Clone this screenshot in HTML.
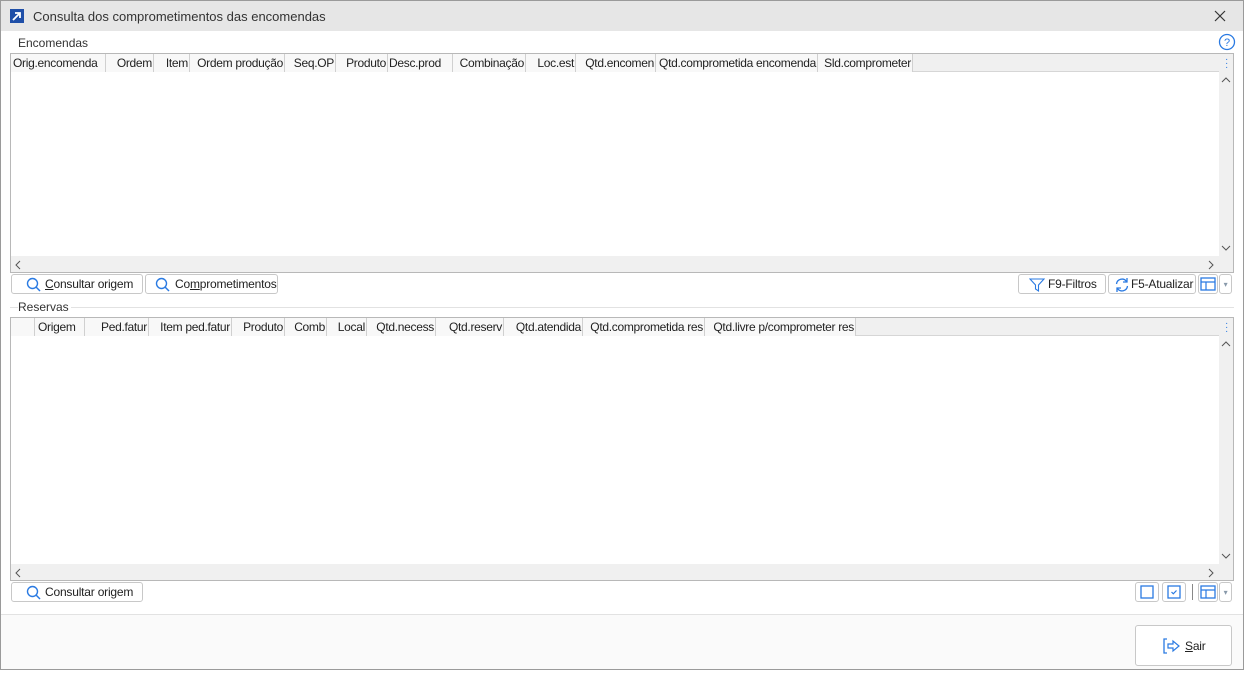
<!DOCTYPE html><html><head><style>
*{box-sizing:border-box;margin:0;padding:0}
body{width:1258px;height:677px;background:#fff;font-family:"Liberation Sans",sans-serif;font-size:12px;color:#222;position:relative;overflow:hidden}
.a{position:absolute}
.win{left:0;top:0;width:1244px;height:670px;border:1px solid #9a9a9a;background:#fff}
.title{left:1px;top:1px;width:1242px;height:30px;background:#e6e6e6}
.grid{border:1px solid #b8b8b8;background:#fff}
.hdr{position:absolute;left:0;top:0;height:18px;background:#f0f0f0;border-bottom:1px solid #d6d6d6}
.c{position:absolute;top:0;height:18px;line-height:18px;border-right:1px solid #d0d0d0;text-align:right;padding-right:1px;white-space:nowrap;font-size:12px;letter-spacing:-0.3px;background:#f8f8f8}
.vs{position:absolute;right:0;top:0;width:14px;bottom:0;background:#f0f0f0}
.hs{position:absolute;left:0;bottom:0;height:16px;right:14px;background:#f0f0f0}
.btn{position:absolute;height:20px;border:1px solid #c8c8c8;border-radius:3px;background:#fff;font-size:12px;line-height:19px;white-space:nowrap;letter-spacing:-0.2px}
.btn svg{position:absolute}
.lbl{font-size:12px;color:#333}
</style></head><body>
<div class="a win"></div>
<div class="a title"></div>
<div class="a" style="left:10px;top:9px;width:14px;height:14px;background:#1f4fa8"><svg width="14" height="14"><path d="M3 11 L10 4 M5 4 H10 V9" stroke="#fff" stroke-width="1.8" fill="none"/></svg></div>
<div class="a" style="left:33px;top:9px;font-size:13px;color:#333">Consulta dos comprometimentos das encomendas</div>
<svg class="a" style="left:1214px;top:10px" width="12" height="12"><path d="M1 1L11 11M11 1L1 11" stroke="#333" stroke-width="1.2"/></svg>
<div class="a lbl" style="left:18px;top:36px">Encomendas</div>
<svg class="a" style="left:1218px;top:33px" width="18" height="18"><circle cx="9" cy="9" r="7.5" stroke="#2a7ae2" stroke-width="1.3" fill="none"/><text x="9" y="13" font-size="11" text-anchor="middle" fill="#2a7ae2" font-family="Liberation Sans">?</text></svg>

<div class="a grid" style="left:10px;top:53px;width:1224px;height:220px">
<div class="hdr" style="width:1208px"></div>
<div class="c" style="left:0;width:95px;text-align:left;padding-left:2px">Orig.encomenda</div>
<div class="c" style="left:95px;width:48px">Ordem</div>
<div class="c" style="left:143px;width:36px">Item</div>
<div class="c" style="left:179px;width:95px">Ordem produção</div>
<div class="c" style="left:274px;width:51px">Seq.OP</div>
<div class="c" style="left:325px;width:52px">Produto</div>
<div class="c" style="left:377px;width:65px;text-align:left;padding-left:1px">Desc.prod</div>
<div class="c" style="left:442px;width:73px">Combinação</div>
<div class="c" style="left:515px;width:50px">Loc.est</div>
<div class="c" style="left:565px;width:80px">Qtd.encomen</div>
<div class="c" style="left:645px;width:162px">Qtd.comprometida encomenda</div>
<div class="c" style="left:807px;width:95px">Sld.comprometer</div>
<div class="vs"><div class="a" style="left:6px;top:4px;color:#2a7ae2;font-size:10px;line-height:4px">·<br>·<br>·</div><svg class="a" style="left:2px;top:22px" width="10" height="8"><path d="M1 6L5 2L9 6" stroke="#555" fill="none"/></svg><svg class="a" style="left:2px;top:190px" width="10" height="8"><path d="M1 2L5 6L9 2" stroke="#555" fill="none"/></svg></div>
<div class="hs"><svg class="a" style="left:3px;top:4px" width="8" height="10"><path d="M6 1L2 5L6 9" stroke="#555" fill="none"/></svg><svg class="a" style="right:4px;top:4px" width="8" height="10"><path d="M2 1L6 5L2 9" stroke="#555" fill="none"/></svg></div>
</div>

<div class="btn" style="left:11px;top:274px;width:132px"><svg style="left:14px;top:2px" width="16" height="16"><circle cx="6.5" cy="6.5" r="5" stroke="#2a7ae2" stroke-width="1.4" fill="none"/><path d="M10 10L14 14" stroke="#2a7ae2" stroke-width="1.5"/></svg><span style="position:absolute;left:33px"><u>C</u>onsultar origem</span></div>
<div class="btn" style="left:145px;top:274px;width:133px"><svg style="left:9px;top:2px" width="16" height="16"><circle cx="6.5" cy="6.5" r="5" stroke="#2a7ae2" stroke-width="1.4" fill="none"/><path d="M10 10L14 14" stroke="#2a7ae2" stroke-width="1.5"/></svg><span style="position:absolute;left:29px">Co<u>m</u>prometimentos</span></div>
<div class="btn" style="left:1018px;top:274px;width:88px"><svg style="left:10px;top:2px" width="16" height="16"><path d="M1 2H15L9.5 8V14L6.5 12V8Z" stroke="#2a7ae2" stroke-width="1.1" fill="none"/></svg><span style="position:absolute;left:29px">F9-Filtros</span></div>
<div class="btn" style="left:1108px;top:274px;width:88px"><svg style="left:5px;top:2px" width="16" height="16"><path d="M2.5 7A5.5 5.5 0 0 1 12.5 4.5M13.5 9A5.5 5.5 0 0 1 3.5 11.5" stroke="#2a7ae2" stroke-width="1.3" fill="none"/><path d="M13 1V5H9M3 15V11H7" stroke="#2a7ae2" stroke-width="1.3" fill="none"/></svg><span style="position:absolute;left:22px">F5-Atualizar</span></div>
<div class="btn" style="left:1198px;top:274px;width:20px"><svg style="left:1px;top:1px" width="16" height="16"><rect x="1" y="2" width="14" height="12" stroke="#2a7ae2" stroke-width="1.3" fill="none"/><path d="M1 6H15M6 6V14" stroke="#2a7ae2" stroke-width="1.2"/></svg></div>
<div class="btn" style="left:1219px;top:274px;width:13px;color:#89a;font-size:8px;text-align:center">▾</div>

<div class="a" style="left:10px;top:307px;width:1224px;height:1px;background:#e2e2e2"></div>
<div class="a lbl" style="left:18px;top:300px;background:#fff;padding-right:2px">Reservas</div>

<div class="a grid" style="left:10px;top:317px;width:1224px;height:264px">
<div class="hdr" style="width:1208px"></div>
<div class="c" style="left:0;width:24px"></div>
<div class="c" style="left:24px;width:50px;text-align:left;padding-left:3px">Origem</div>
<div class="c" style="left:74px;width:64px">Ped.fatur</div>
<div class="c" style="left:138px;width:83px">Item ped.fatur</div>
<div class="c" style="left:221px;width:53px">Produto</div>
<div class="c" style="left:274px;width:42px">Comb</div>
<div class="c" style="left:316px;width:40px">Local</div>
<div class="c" style="left:356px;width:69px">Qtd.necess</div>
<div class="c" style="left:425px;width:68px">Qtd.reserv</div>
<div class="c" style="left:493px;width:79px">Qtd.atendida</div>
<div class="c" style="left:572px;width:122px">Qtd.comprometida res</div>
<div class="c" style="left:694px;width:151px">Qtd.livre p/comprometer res</div>
<div class="vs"><div class="a" style="left:6px;top:4px;color:#2a7ae2;font-size:10px;line-height:4px">·<br>·<br>·</div><svg class="a" style="left:2px;top:22px" width="10" height="8"><path d="M1 6L5 2L9 6" stroke="#555" fill="none"/></svg><svg class="a" style="left:2px;top:234px" width="10" height="8"><path d="M1 2L5 6L9 2" stroke="#555" fill="none"/></svg></div>
<div class="hs"><svg class="a" style="left:3px;top:4px" width="8" height="10"><path d="M6 1L2 5L6 9" stroke="#555" fill="none"/></svg><svg class="a" style="right:4px;top:4px" width="8" height="10"><path d="M2 1L6 5L2 9" stroke="#555" fill="none"/></svg></div>
</div>

<div class="btn" style="left:11px;top:582px;width:132px"><svg style="left:14px;top:2px" width="16" height="16"><circle cx="6.5" cy="6.5" r="5" stroke="#2a7ae2" stroke-width="1.4" fill="none"/><path d="M10 10L14 14" stroke="#2a7ae2" stroke-width="1.5"/></svg><span style="position:absolute;left:33px">Consultar origem</span></div>
<div class="btn" style="left:1135px;top:582px;width:24px"><svg style="left:3px;top:1px" width="16" height="16"><rect x="2" y="2" width="12" height="12" stroke="#2a7ae2" stroke-width="1.3" fill="none"/></svg></div>
<div class="btn" style="left:1162px;top:582px;width:24px"><svg style="left:3px;top:1px" width="16" height="16"><rect x="2" y="2" width="12" height="12" stroke="#2a7ae2" stroke-width="1.3" fill="none"/><path d="M5.5 8L7.3 9.8L10.5 6.5" stroke="#2a7ae2" stroke-width="1.2" fill="none"/></svg></div>
<div class="a" style="left:1192px;top:584px;width:1px;height:16px;background:#888"></div>
<div class="btn" style="left:1198px;top:582px;width:20px"><svg style="left:1px;top:1px" width="16" height="16"><rect x="1" y="2" width="14" height="12" stroke="#2a7ae2" stroke-width="1.3" fill="none"/><path d="M1 6H15M6 6V14" stroke="#2a7ae2" stroke-width="1.2"/></svg></div>
<div class="btn" style="left:1219px;top:582px;width:13px;color:#89a;font-size:8px;text-align:center">▾</div>

<div class="a" style="left:1px;top:614px;width:1242px;height:55px;background:#fafafa;border-top:1px solid #e2e2e2"></div>
<div class="btn" style="left:1135px;top:625px;width:97px;height:41px"><svg style="left:26px;top:12px" width="20" height="16"><path d="M5 1H2V15H5" stroke="#2a7ae2" stroke-width="1.3" fill="none"/><path d="M6 6H11V3L17 8L11 13V10H6Z" stroke="#2a7ae2" stroke-width="1.2" fill="none"/></svg><span style="position:absolute;left:49px;top:11px;font-size:12px"><u>S</u>air</span></div>
</body></html>
